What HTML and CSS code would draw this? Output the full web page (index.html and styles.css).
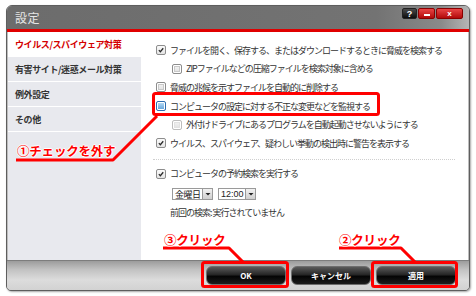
FILE: index.html
```html
<!DOCTYPE html>
<html lang="ja">
<head>
<meta charset="utf-8">
<title>設定</title>
<link rel="stylesheet" href="styles.css">
</head>
<body>
<div class="window">
  <div class="titlebar">
    <span class="title">設定</span>
    <div class="tb-buttons">
      <span class="tb help">?</span>
      <span class="tb min"><i></i></span>
      <span class="tb close">x</span>
    </div>
  </div>
  <div class="redline"></div>
  <div class="main">
    <nav class="sidebar">
      <div class="nav-item active">ウイルス/スパイウェア対策</div>
      <div class="nav-item">有害サイト/迷惑メール対策</div>
      <div class="nav-item">例外設定</div>
      <div class="nav-item">その他</div>
    </nav>
    <section class="content">
      <div class="row"><span class="cb checked"><svg viewBox="0 0 10 10"><path d="M2.3 5.2 L4.2 7.1 L7.8 2.8" /></svg></span>ファイルを開く、保存する、またはダウンロードするときに脅威を検索する</div>
      <div class="row sub"><span class="cb"></span>ZIPファイルなどの圧縮ファイルを検索対象に含める</div>
      <div class="row"><span class="cb"></span>脅威の兆候を示すファイルを自動的に削除する</div>
      <div class="row"><span class="cb focus"></span>コンピュータの設定に対する不正な変更などを監視する</div>
      <div class="row sub"><span class="cb light"></span>外付けドライブにあるプログラムを自動起動させないようにする</div>
      <div class="row"><span class="cb checked"><svg viewBox="0 0 10 10"><path d="M2.3 5.2 L4.2 7.1 L7.8 2.8" /></svg></span>ウイルス、スパイウェア、疑わしい挙動の検出時に警告を表示する</div>
      <div class="sep"></div>
      <div class="row"><span class="cb checked"><svg viewBox="0 0 10 10"><path d="M2.3 5.2 L4.2 7.1 L7.8 2.8" /></svg></span>コンピュータの予約検索を実行する</div>
      <div class="selects">
        <div class="select day"><span class="val">金曜日</span><span class="arrow"><svg viewBox="0 0 8 8"><path d="M1.5 3 L6.5 3 L4 5.5 Z" /></svg></span></div>
        <div class="select time"><span class="val">12:00</span><span class="arrow"><svg viewBox="0 0 8 8"><path d="M1.5 3 L6.5 3 L4 5.5 Z" /></svg></span></div>
      </div>
      <div class="last">前回の検索: 実行されていません</div>
    </section>
  </div>
  <div class="bottombar">
    <button class="btn">OK</button>
    <button class="btn">キャンセル</button>
    <button class="btn">適用</button>
  </div>
</div>

<svg class="annot-lines" width="476" height="296" viewBox="0 0 476 296">
  <rect x="153.5" y="93.5" width="225" height="21" rx="2" />
  <polyline points="16,160 113,160 157,116" />
  <rect x="202.5" y="262.5" width="85" height="24" rx="2" />
  <polyline points="163,248 229,248 243,262" />
  <rect x="372.5" y="262.5" width="84" height="24" rx="2" />
  <polyline points="339,248 401,248 415,262" />
</svg>
<div class="label l1">①チェックを外す</div>
<div class="label l3">③クリック</div>
<div class="label l2">②クリック</div>
</body>
</html>
```
FILE: styles.css
```css
* { box-sizing: border-box; }
html, body { margin: 0; padding: 0; }
body {
  width: 476px;
  height: 296px;
  background: #ffffff;
  font-family: "Noto Sans CJK JP", "Liberation Sans", sans-serif;
  color: #333333;
  position: relative;
  overflow: hidden;
}

.window {
  margin: 5px 0 0 6px;
  width: 464px;
  height: 286px;
  border: 1px solid #5e5e5e;
  border-radius: 6px 6px 5px 5px;
  box-shadow: 1px 1px 2px rgba(0,0,0,0.35);
  background: #c8c8c8;
  display: flex;
  flex-direction: column;
  overflow: hidden;
}

.titlebar {
  height: 23px;
  background: linear-gradient(to right, #6c6c6c 0%, #737373 80%, #8a8a8a 94%, #b5b5b5 100%);
  display: flex;
  align-items: center;
  justify-content: space-between;
  padding: 0 6px 0 8px;
  flex: none;
}
.title {
  color: #e6e6e6;
  font-size: 12px;
  letter-spacing: 0.5px;
  line-height: 1;
  margin-top: 1px;
}
.tb-buttons {
  display: flex;
  gap: 1px;
  align-self: flex-start;
  margin-top: 2px;
}
.tb {
  height: 11px;
  display: flex;
  align-items: center;
  justify-content: center;
  font-family: "Liberation Sans", sans-serif;
  font-weight: bold;
  font-size: 9px;
  color: #ffffff;
  border-radius: 2px;
}
.tb.help {
  width: 15px;
  background: linear-gradient(#4a4a4a, #0c0c0c);
  border: 1px solid #222;
}
.tb.min {
  width: 17px;
  background: linear-gradient(#e84545, #b20a0a);
  border: 1px solid #8a0000;
}
.tb.min i {
  display: block;
  width: 6px;
  height: 2px;
  background: #fff;
  margin-top: 3px;
}
.tb.close {
  width: 27px;
  background: linear-gradient(#e84545, #b20a0a);
  border: 1px solid #8a0000;
  font-size: 8px;
}

.redline {
  height: 3px;
  background: #e00000;
  flex: none;
}

.main {
  flex: 1;
  display: flex;
  background: #ffffff;
  border-left: 1px solid #bdbdbd;
  border-right: 1px solid #bdbdbd;
}

.sidebar {
  width: 133px;
  background: #e8e9ee;
  display: flex;
  flex-direction: column;
  flex: none;
}
.nav-item {
  height: 25px;
  border-bottom: 1px solid #ffffff;
  display: flex;
  align-items: center;
  padding-left: 7px;
  font-size: 9px;
  font-weight: bold;
  letter-spacing: -0.4px;
  color: #333333;
}
.nav-item.active {
  background: #ffffff;
  color: #d40000;
}

.content {
  flex: 1;
  padding: 9px 0 0 15px;
  display: flex;
  flex-direction: column;
}
.row {
  height: 18.6px;
  display: flex;
  align-items: center;
  gap: 4px;
  font-size: 9px;
  letter-spacing: -1px;
  white-space: nowrap;
  color: #333333;
}
.row.sub { padding-left: 16px; }

.cb {
  width: 10px;
  height: 10px;
  flex: none;
  border: 1px solid #8d8d8d;
  border-radius: 2px;
  background: linear-gradient(#f6f6f6, #dedede);
  box-shadow: inset 0 0 0 1px #ffffff, inset 0 0 0 2px #c9c9c9;
  display: flex;
  align-items: center;
  justify-content: center;
}
.cb.light {
  border-color: #bdbdbd;
  box-shadow: inset 0 0 0 1px #ffffff, inset 0 0 0 2px #e2e2e2;
}
.cb.checked {
  box-shadow: none;
  background: linear-gradient(#fafafa, #e4e4e4);
}
.cb svg { width: 10px; height: 10px; }
.cb svg path {
  fill: none;
  stroke: #2a2a2a;
  stroke-width: 1.6;
}
.cb.focus {
  border-color: #2d6db0;
  background: linear-gradient(#bfe0f8, #5d9fd8);
  box-shadow: inset 0 0 0 1px #ffffff;
}

.sep {
  height: 0;
  border-top: 1px dotted #cfcfcf;
  margin: 6px 13px 5px -3px;
}

.selects {
  display: flex;
  gap: 5px;
  padding-left: 16px;
  margin-top: 5px;
}
.select {
  height: 12px;
  border: 1px solid #9a9a9a;
  background: #ffffff;
  display: flex;
  align-items: center;
  justify-content: space-between;
  font-size: 9px;
  letter-spacing: -0.5px;
  color: #222;
}
.select .val { padding-left: 2px; line-height: 1; }
.select.day { width: 41px; }
.select.time { width: 38px; font-family: "Liberation Sans", sans-serif; font-size: 9px; letter-spacing: 0; }
.arrow {
  width: 10px;
  height: 10px;
  border-left: 1px solid #9a9a9a;
  background: linear-gradient(#f2f2f2, #cfcfcf);
  display: flex;
  align-items: center;
  justify-content: center;
}
.arrow svg { width: 8px; height: 8px; }
.arrow svg path { fill: #222; }

.last {
  margin-top: 6px;
  padding-left: 14px;
  font-size: 9px;
  letter-spacing: -1px;
  line-height: 14px;
  color: #333;
}

.bottombar {
  height: 30px;
  flex: none;
  border-top: 1px solid #7d7d7d;
  background: linear-gradient(#9c9c9c 0%, #c2c2c2 30%, #dcdcdc 65%, #d2d2d2 100%);
  display: flex;
  align-items: center;
  justify-content: flex-end;
  gap: 5px;
  padding-right: 13px;
}
.btn {
  width: 80px;
  height: 19px;
  border: 1px solid #6e6e6e;
  border-radius: 6px;
  background: linear-gradient(#5a5a5a 0%, #262626 45%, #050505 55%, #1c1c1c 100%);
  color: #ffffff;
  font-family: "Noto Sans CJK JP", "Liberation Sans", sans-serif;
  font-size: 8px;
  font-weight: bold;
  padding: 0;
  line-height: 1;
}

.annot-lines {
  position: absolute;
  left: 0;
  top: 0;
  pointer-events: none;
}
.annot-lines rect, .annot-lines polyline {
  fill: none;
  stroke: #ff0000;
  stroke-width: 3;
  stroke-linejoin: round;
}

.label {
  position: absolute;
  color: #ff0000;
  font-family: "Noto Sans CJK JP", sans-serif;
  font-weight: bold;
  font-size: 12.5px;
  line-height: 14px;
  letter-spacing: -0.2px;
  white-space: nowrap;
  text-shadow: 1px 0 0 #fff, -1px 0 0 #fff, 0 1px 0 #fff, 0 -1px 0 #fff;
}
.l1 { left: 17px; top: 144px; }
.l3 { left: 164px; top: 233px; }
.l2 { left: 339px; top: 233px; }
```
